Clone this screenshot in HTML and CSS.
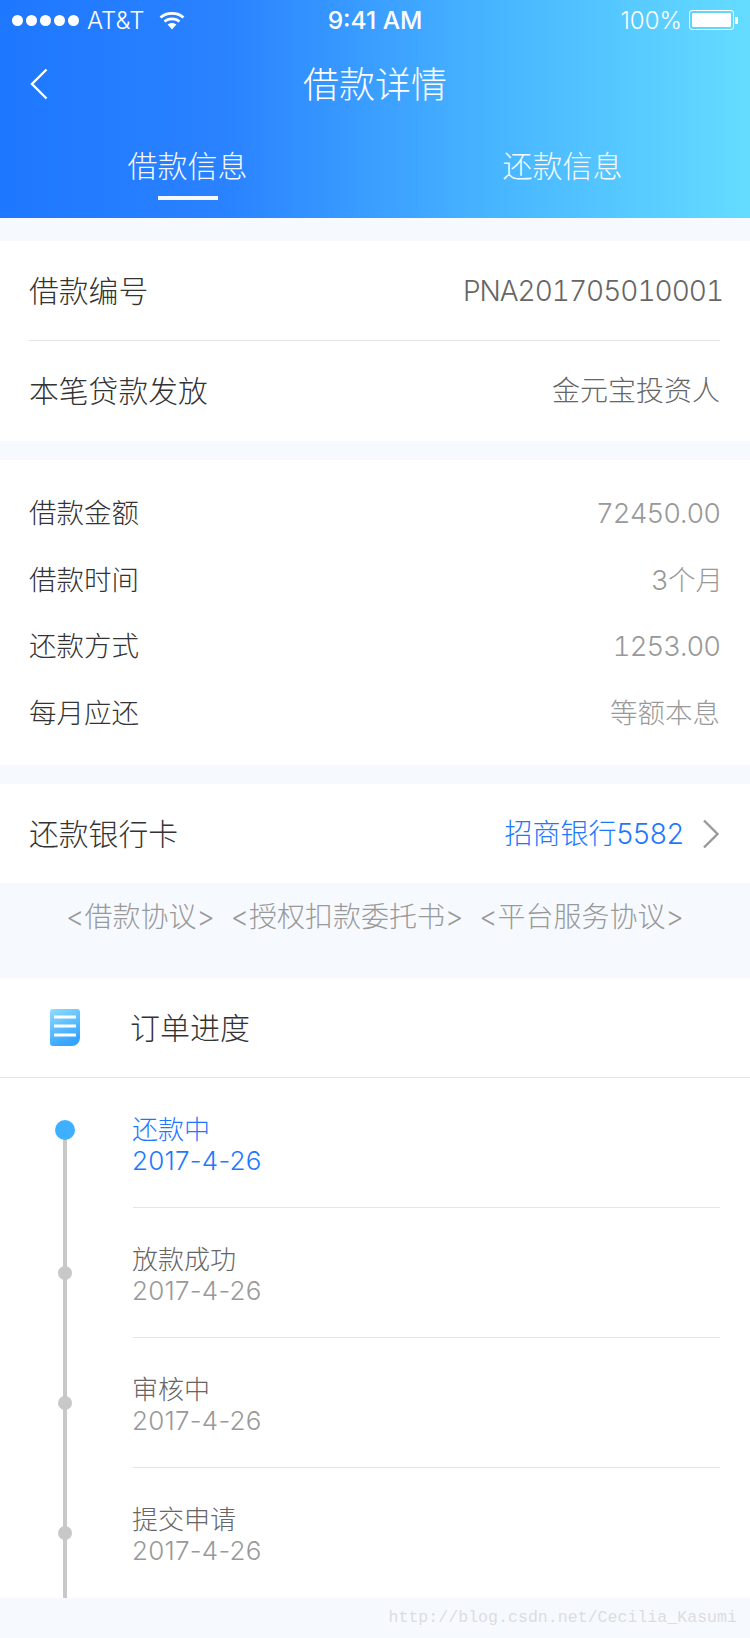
FILE: index.html
```html
<!DOCTYPE html>
<html lang="zh-CN">
<head>
  <meta charset="UTF-8" />
  <meta name="viewport" content="width=device-width, initial-scale=1.0" />
  <title>借款详情</title>
  <link rel="stylesheet" href="styles.css">
</head>
<body>
  <header class="top">
    <div class="status">
      <div class="status-left">
        <span class="signal"><i></i><i></i><i></i><i></i><i></i></span>
        <span>AT&amp;T</span>
        <svg class="wifi" width="26" height="19" viewBox="0 0 26 19"><path d="M1.5 6.5C7.5 1 18.5 1 24.5 6.5M5.5 10.5C9.5 7 16.5 7 20.5 10.5" fill="none" stroke="#fff" stroke-width="2.6"/><path d="M8.6 13.5C11 11.4 15 11.4 17.4 13.5L13 18.5Z" fill="#fff"/></svg>
      </div>
      <div class="status-time">9:41 AM</div>
      <div class="status-right">
        <span>100%</span>
        <span class="battery"><b></b></span>
        <span class="battery-cap"></span>
      </div>
    </div>
    <div class="nav">
      <svg class="back" width="18" height="32" viewBox="0 0 18 32"><path d="M16.5 1.5L2 16l14.5 14.5" fill="none" stroke="#fff" stroke-width="2.4"/></svg>
      <h1>借款详情</h1>
    </div>
    <div class="tabs">
      <div class="tab tab-on">借款信息</div>
      <div class="tab">还款信息</div>
    </div>
  </header>

  <section class="card card-first">
    <div class="row row-big row-line">
      <span class="cjk">借款编号</span>
      <span class="val-dark val-out num">PNA201705010001</span>
    </div>
    <div class="row row-big">
      <span class="cjk">本笔贷款发放</span>
      <span class="val-dark cjk">金元宝投资人</span>
    </div>
  </section>

  <section class="card card-list">
    <div class="row row-small"><span class="cjk">借款金额</span><span class="val num">72450.00</span></div>
    <div class="row row-small"><span class="cjk">借款时间</span><span class="val val-out cjk">3个月</span></div>
    <div class="row row-small"><span class="cjk">还款方式</span><span class="val num">1253.00</span></div>
    <div class="row row-small"><span class="cjk">每月应还</span><span class="val cjk">等额本息</span></div>
  </section>

  <section class="card card-bank">
    <div class="row row-bank">
      <span class="cjk">还款银行卡</span>
      <span class="bank">
        <span class="val-blue cjk">招商银行5582</span>
        <svg width="18" height="30" viewBox="0 0 18 30"><path d="M2 1.500L15.500 15 2 28.500" fill="none" stroke="#999" stroke-width="2.400"/></svg>
      </span>
    </div>
  </section>

  <div class="links">
    <span>&lt;借款协议&gt;</span>
    <span>&lt;授权扣款委托书&gt;</span>
    <span>&lt;平台服务协议&gt;</span>
  </div>

  <section class="progress">
    <div class="progress-head">
      <svg width="30" height="38" viewBox="0 0 30 38">
        <defs>
          <linearGradient id="doc" x1="0" y1="0" x2="0.4" y2="1">
            <stop offset="0" stop-color="#8fdcff"/>
            <stop offset="1" stop-color="#35a4ff"/>
          </linearGradient>
        </defs>
        <path d="M3 0H27a3 3 0 0 1 3 3V29a8 8 0 0 1-8 8H3a3 3 0 0 1-3-3V3A3 3 0 0 1 3 0Z" fill="url(#doc)"/>
        <path d="M4 8H26M4 17H26M4 26H26" stroke="#fff" stroke-width="3"/>
      </svg>
      <span class="cjk">订单进度</span>
    </div>
    <ol class="steps">
      <li class="step step-now">
        <div class="rail"><i class="dot"></i></div>
        <div class="step-body"><p>还款中</p><p class="date">2017-4-26</p></div>
      </li>
      <li class="step">
        <div class="rail"><i class="dot"></i></div>
        <div class="step-body"><p>放款成功</p><p class="date">2017-4-26</p></div>
      </li>
      <li class="step">
        <div class="rail"><i class="dot"></i></div>
        <div class="step-body"><p>审核中</p><p class="date">2017-4-26</p></div>
      </li>
      <li class="step step-last">
        <div class="rail"><i class="dot"></i></div>
        <div class="step-body"><p>提交申请</p><p class="date">2017-4-26</p></div>
      </li>
    </ol>
  </section>

  <footer class="mark">http://blog.csdn.net/Cecilia_Kasumi</footer>
</body>
</html>
```

FILE: styles.css
```css
* {
  box-sizing: border-box;
}
body {
  margin: 0;
  height: 1638px;
  overflow: hidden;
  background: #f6faff;
  color: #333;
  font-family: "Inter", "Noto Sans CJK SC", "Noto Sans", sans-serif;
  font-weight: 300;
}
p, h1, ol {
  margin: 0;
  padding: 0;
}
/* chinese glyphs sit low next to Inter, lift them a bit */
.cjk {
  padding-bottom: 4px;
}
.num {
  font-variant-numeric: tabular-nums;
  letter-spacing: -1px;
}

/* header */
.top {
  height: 218px;
  background: linear-gradient(90deg, #1e78ff 0%, #2a82ff 30%, #47b4ff 65%, #64dcff 100%);
  color: #fff;
}
.status {
  height: 40px;
  padding: 0 12px;
  display: grid;
  grid-template-columns: 1fr auto 1fr;
  align-items: center;
  font-size: 24px;
}
.status-left {
  display: flex;
  align-items: center;
  gap: 8px;
}
.signal {
  display: flex;
  gap: 3px;
}
.signal i {
  width: 11px;
  height: 11px;
  border-radius: 50%;
  background: #fff;
}
.wifi {
  margin-left: 7px;
}
.status-time {
  font-size: 24.5px;
  font-weight: 500;
}
.status-right {
  display: flex;
  align-items: center;
  justify-content: flex-end;
}
.battery {
  width: 45px;
  height: 20px;
  margin-left: 7px;
  padding: 2px;
  border: 1px solid #fff;
  border-radius: 3px;
}
.battery b {
  display: block;
  height: 100%;
  background: #fff;
  border-radius: 1px;
}
.battery-cap {
  width: 3px;
  height: 7px;
  margin-left: 1px;
  background: #fff;
}
.nav {
  height: 88px;
  padding: 0 30px;
  display: grid;
  grid-template-columns: 1fr auto 1fr;
  align-items: center;
}
.nav h1 {
  padding-bottom: 4px;
  font-size: 36px;
  font-weight: 300;
}
.tabs {
  height: 90px;
  display: flex;
}
.tab {
  flex: 1;
  height: 100%;
  padding-top: 16px;
  text-align: center;
  font-size: 30px;
  line-height: 44px;
  opacity: 0.95;
}
.tab-on::after {
  content: "";
  display: block;
  width: 60px;
  height: 4px;
  margin: 8px auto 0;
  background: #fff;
}

/* cards */
.card {
  background: #fff;
}
.card-first {
  margin-top: 23px;
  height: 200px;
  padding: 1px 30px 0 29px;
}
.card-list {
  margin-top: 19px;
  height: 305px;
  padding: 20px 30px 19px 29px;
  display: flex;
  flex-direction: column;
}
.card-bank {
  margin-top: 19px;
  height: 99px;
  padding: 0 30px 0 29px;
}
.row {
  display: flex;
  justify-content: space-between;
  align-items: center;
}
.row-big {
  height: 99px;
  font-size: 29.8px;
}
.row-line {
  border-bottom: 1px solid #e4e4e4;
}
.row-small {
  flex: 1;
  font-size: 27.5px;
}
.row-bank {
  height: 99px;
  font-size: 29.8px;
}
.val-dark {
  color: #666;
  font-size: 28px;
}
.val {
  color: #999;
}
.val-out {
  margin-right: -3px;
}
.val-blue {
  color: #1e78ff;
  font-size: 28px;
}
.bank {
  display: flex;
  align-items: center;
  gap: 18px;
}

.links {
  height: 95px;
  padding-top: 10px;
  display: flex;
  justify-content: center;
  align-items: flex-start;
  gap: 16px;
  color: #999;
  font-size: 28px;
  line-height: 48px;
}

/* progress */
.progress {
  height: 620px;
  background: #fff;
}
.progress-head {
  height: 100px;
  padding-left: 50px;
  display: flex;
  align-items: center;
  gap: 50px;
  font-size: 30px;
  border-bottom: 1px solid #e4e4e4;
}
.steps {
  list-style: none;
  padding: 37px 30px 0 0;
}
.step {
  height: 130px;
  display: flex;
}
.step-last {
  height: 93px;
}
.rail {
  width: 24px;
  margin: 0 53px;
  display: flex;
  justify-content: center;
  background: linear-gradient(#c8c8c8, #c8c8c8) center / 4px 100% no-repeat;
}
.dot {
  width: 14px;
  height: 14px;
  margin-top: 21px;
  border-radius: 50%;
  background: #c8c8c8;
}
.step-now .dot {
  width: 20px;
  height: 20px;
  margin-top: 5px;
  background: #3eb0ff;
}
.step-now .rail {
  background-position: center 15px;
}
.step-body {
  flex: 1;
  height: 94px;
  margin: -1px 0 0 3px;
  border-bottom: 1px solid #e4e4e4;
  color: #666;
  font-size: 26px;
  line-height: 31px;
}
.step-body p {
  margin-left: -1px;
}
.step-body .date {
  color: #999;
  letter-spacing: 0.25px;
}
.step-now .step-body,
.step-now .step-body .date {
  color: #1e78ff;
}
.step-last .step-body {
  border-bottom: 0;
}

.mark {
  height: 40px;
  padding-right: 13px;
  text-align: right;
  font-family: "Liberation Mono", monospace;
  font-size: 16.6px;
  line-height: 40px;
  color: #ddd;
}
```
